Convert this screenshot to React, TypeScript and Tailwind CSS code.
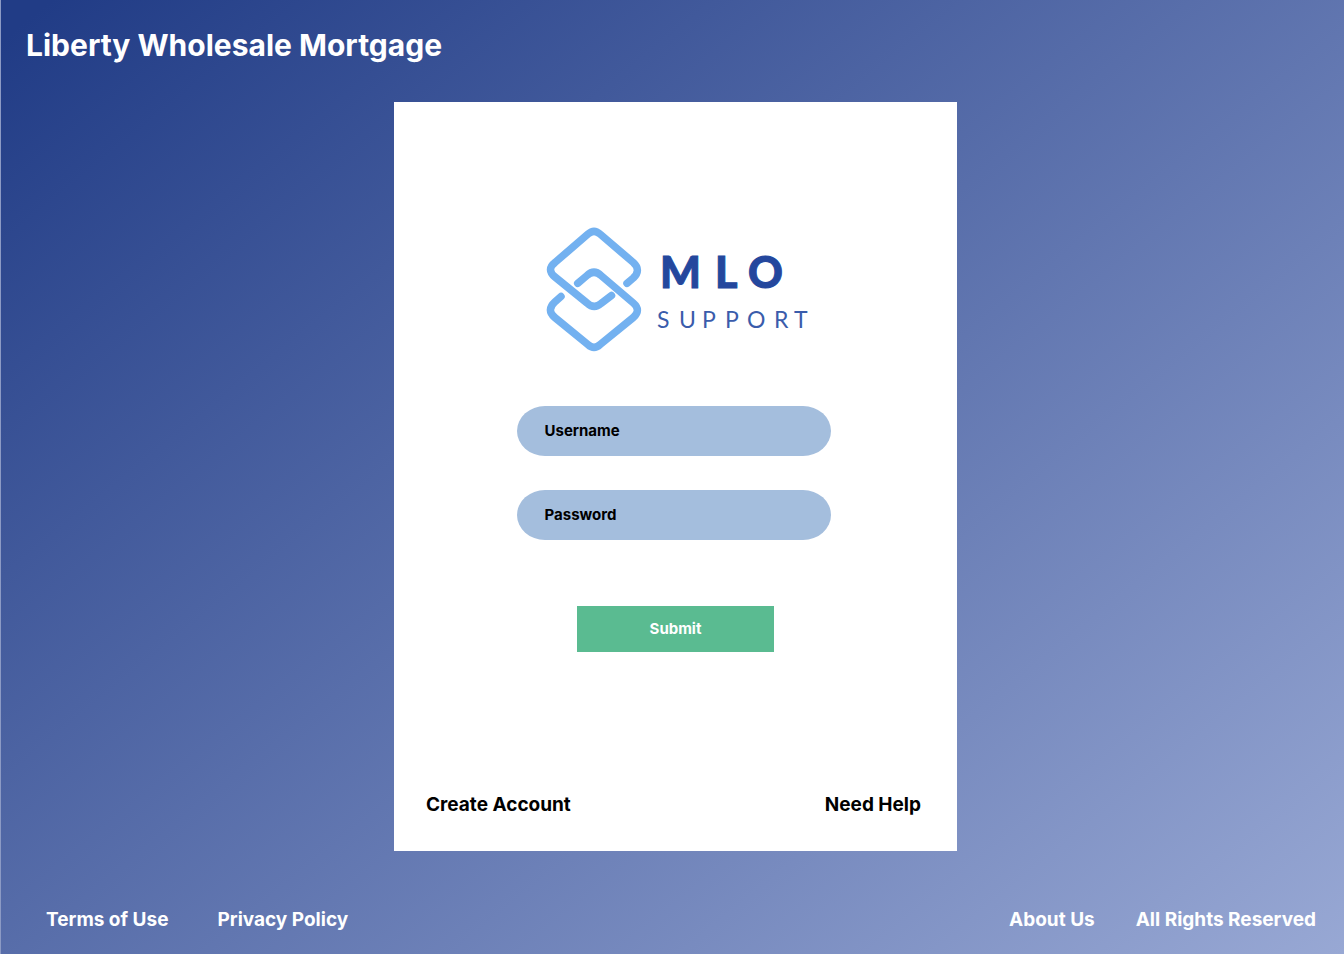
import React from "react";

function Logo() {
  return (
    <svg viewBox="-7 0 273 130" className="h-[130px] w-[273px]" role="img" aria-label="MLO Support">
      <g fill="none" stroke="#73b1f0" strokeWidth="7.5" strokeLinecap="round" strokeLinejoin="round">
        <path d="M81 57.3L87.3 52Q95.500 44 87.3 36.500L54 8Q48 2.600 42 8L9 36.500Q0 43.500 9 51L41 77Q48 83.500 55 77.500L65.500 69.500" />
        <path d="M31.700 57.3L41 49.500Q48 43 55 49.500L87.3 77Q95.500 84 87.3 91.500L54 118.600Q48 124 42 118.600L8.800 91.500Q0 84 8.800 76L15 70.500" />
      </g>
      <text
        x="114 169 202"
        y="62"
        fill="#24479d"
        stroke="#24479d"
        strokeWidth="1"
        fontFamily="Lato, sans-serif"
        fontWeight="900"
        fontSize="43"
      >
        MLO
      </text>
      <text
        x="111 133 156 179 201 228 248"
        y="102"
        fill="#3a5cab"
        fontFamily="Lato, sans-serif"
        fontWeight="400"
        fontSize="23"
      >
        SUPPORT
      </text>
    </svg>
  );
}

function Field({ id, label, type }: { id: string; label: string; type: string }) {
  return (
    <div className="flex h-[50px] items-center gap-3 rounded-[28px/25px] bg-[#a4bedd] px-7 text-[15px] leading-6 text-black">
      <label htmlFor={id}>{label}</label>
      <input id={id} type={type} className="h-full min-w-0 flex-1 bg-transparent outline-none" />
    </div>
  );
}

export default function App() {
  return (
    <div className="flex min-h-screen flex-col border-l border-[#8c9ac4] bg-[linear-gradient(141deg,#213c86_2%,#98a8d4_100%)] font-['Inter',sans-serif] font-bold text-white">
      <header className="px-[25px] pt-[25px]">
        <h1 className="text-[30px] leading-10">Liberty Wholesale Mortgage</h1>
      </header>
      <main className="mt-[37px] flex justify-center pl-[6px]">
        <section className="flex w-full max-w-[563px] flex-col bg-white px-8 pt-[124px] pb-8 text-black">
          <form className="flex flex-col items-center" onSubmit={(e) => e.preventDefault()}>
            <Logo />
            <div className="mt-[50px] flex w-full max-w-[318px] flex-col gap-[34px] pr-1">
              <Field id="username" label="Username" type="text" />
              <Field id="password" label="Password" type="password" />
            </div>
            <button type="submit" className="mt-[66px] h-[46px] w-[197px] bg-[#5abb91] text-[15px] text-white">
              Submit
            </button>
          </form>
          <nav className="mt-[139px] flex justify-between pr-1 text-[19px] leading-7">
            <a href="#create">Create Account</a>
            <a href="#help">Need Help</a>
          </nav>
        </section>
      </main>
      <footer className="mt-auto flex justify-between pr-7 pb-5 pl-[45px] text-[19px] leading-7">
        <nav className="flex gap-[49px]">
          <a href="#terms">Terms of Use</a>
          <a href="#privacy">Privacy Policy</a>
        </nav>
        <nav className="flex gap-[41px]">
          <a href="#about">About Us</a>
          <a href="#rights">All Rights Reserved</a>
        </nav>
      </footer>
    </div>
  );
}
